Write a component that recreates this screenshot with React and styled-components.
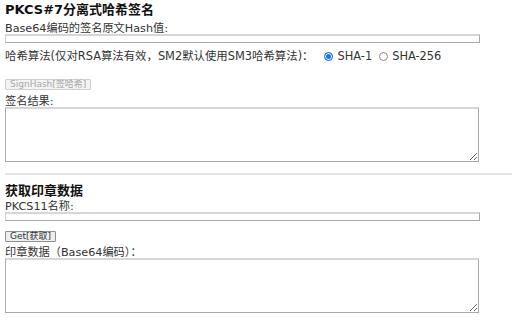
import styled, { createGlobalStyle } from "styled-components";

const GlobalStyle = createGlobalStyle`
  html, body {
    margin: 0;
    padding: 0;
    background: #fff;
  }
  body {
    font-family: "DejaVu Sans", "Noto Sans CJK SC", sans-serif;
    color: #222;
  }
`;

export default function App() {
  return (
    <>
      <GlobalStyle />
      <Page>
        <Title>PKCS#7分离式哈希签名</Title>
        <Label $top={7}>Base64编码的签名原文Hash值:</Label>
        <TextInput type="text" />
        <AlgoRow>
          <span>哈希算法(仅对RSA算法有效，SM2默认使用SM3哈希算法)：</span>
          <RadioGroup>
            <Radio $checked />
            SHA-1
          </RadioGroup>
          <RadioGroup $tight>
            <Radio />
            SHA-256
          </RadioGroup>
        </AlgoRow>
        <Button $top={17} disabled>
          SignHash[签哈希]
        </Button>
        <Label $top={6}>签名结果:</Label>
        <TextArea />
        <Divider />
        <Title $top={9}>获取印章数据</Title>
        <Label $top={4}>PKCS11名称:</Label>
        <TextInput type="text" />
        <Button $top={10}>Get[获取]</Button>
        <Label $top={5}>印章数据（Base64编码）：</Label>
        <TextArea />
      </Page>
    </>
  );
}

const Page = styled.div`
  width: 512px;
  height: 320px;
  overflow: hidden;
  box-sizing: border-box;
  padding: 3px 0 0 5px;
  display: flex;
  flex-direction: column;
  align-items: flex-start;
`;

const Title = styled.div`
  margin-top: ${(p) => p.$top || 0}px;
  font-size: 13px;
  line-height: 13px;
  font-weight: bold;
  color: #111;
`;

const Label = styled.div`
  margin-top: ${(p) => p.$top || 0}px;
  font-size: 11.2px;
  line-height: 11px;
  color: #333;
  white-space: nowrap;
`;

const TextInput = styled.input`
  box-sizing: border-box;
  width: 475px;
  height: 9px;
  margin: 0;
  padding: 0;
  border: 1px solid #a9a9a9;
  border-top: 2px solid #d6d6d6;
  border-left-color: #d0d0d0;
  background: #fff;
  outline: none;
`;

const AlgoRow = styled.div`
  margin-top: 7px;
  display: flex;
  align-items: center;
  font-size: 11.4px;
  line-height: 12px;
  color: #333;
  white-space: nowrap;
`;

const RadioGroup = styled.label`
  display: flex;
  align-items: center;
  gap: 4px;
  margin-left: ${(p) => (p.$tight ? 7 : 11)}px;
`;

const Radio = styled.span`
  box-sizing: border-box;
  width: 9px;
  height: 9px;
  border-radius: 50%;
  border: 1px solid ${(p) => (p.$checked ? "#1a73e8" : "#8a8a8a")};
  background: ${(p) => (p.$checked ? "#1a73e8" : "#fff")};
  box-shadow: ${(p) => (p.$checked ? "inset 0 0 0 1px #fff" : "none")};
`;

const Button = styled.button`
  margin-top: ${(p) => p.$top || 0}px;
  box-sizing: border-box;
  height: 11px;
  padding: 0 4px;
  font-family: "DejaVu Sans", "Noto Sans CJK SC", sans-serif;
  font-size: 9px;
  line-height: 9px;
  color: #333;
  background: #efefef;
  border: 1px solid #8f8f8f;
  border-radius: 1px;

  &:disabled {
    color: #a8a8a8;
    border-color: #cfcfcf;
    background: #f3f3f3;
  }
`;

const TextArea = styled.textarea`
  box-sizing: border-box;
  width: 474px;
  height: 55px;
  margin: 0;
  padding: 0;
  border: 1px solid #a9a9a9;
  border-top: 2px solid #d6d6d6;
  background: #fff;
  outline: none;
`;

const Divider = styled.hr`
  align-self: stretch;
  margin: 11px 0 0 0;
  height: 0;
  border: none;
  border-top: 2px solid #e4e4e4;
`;
